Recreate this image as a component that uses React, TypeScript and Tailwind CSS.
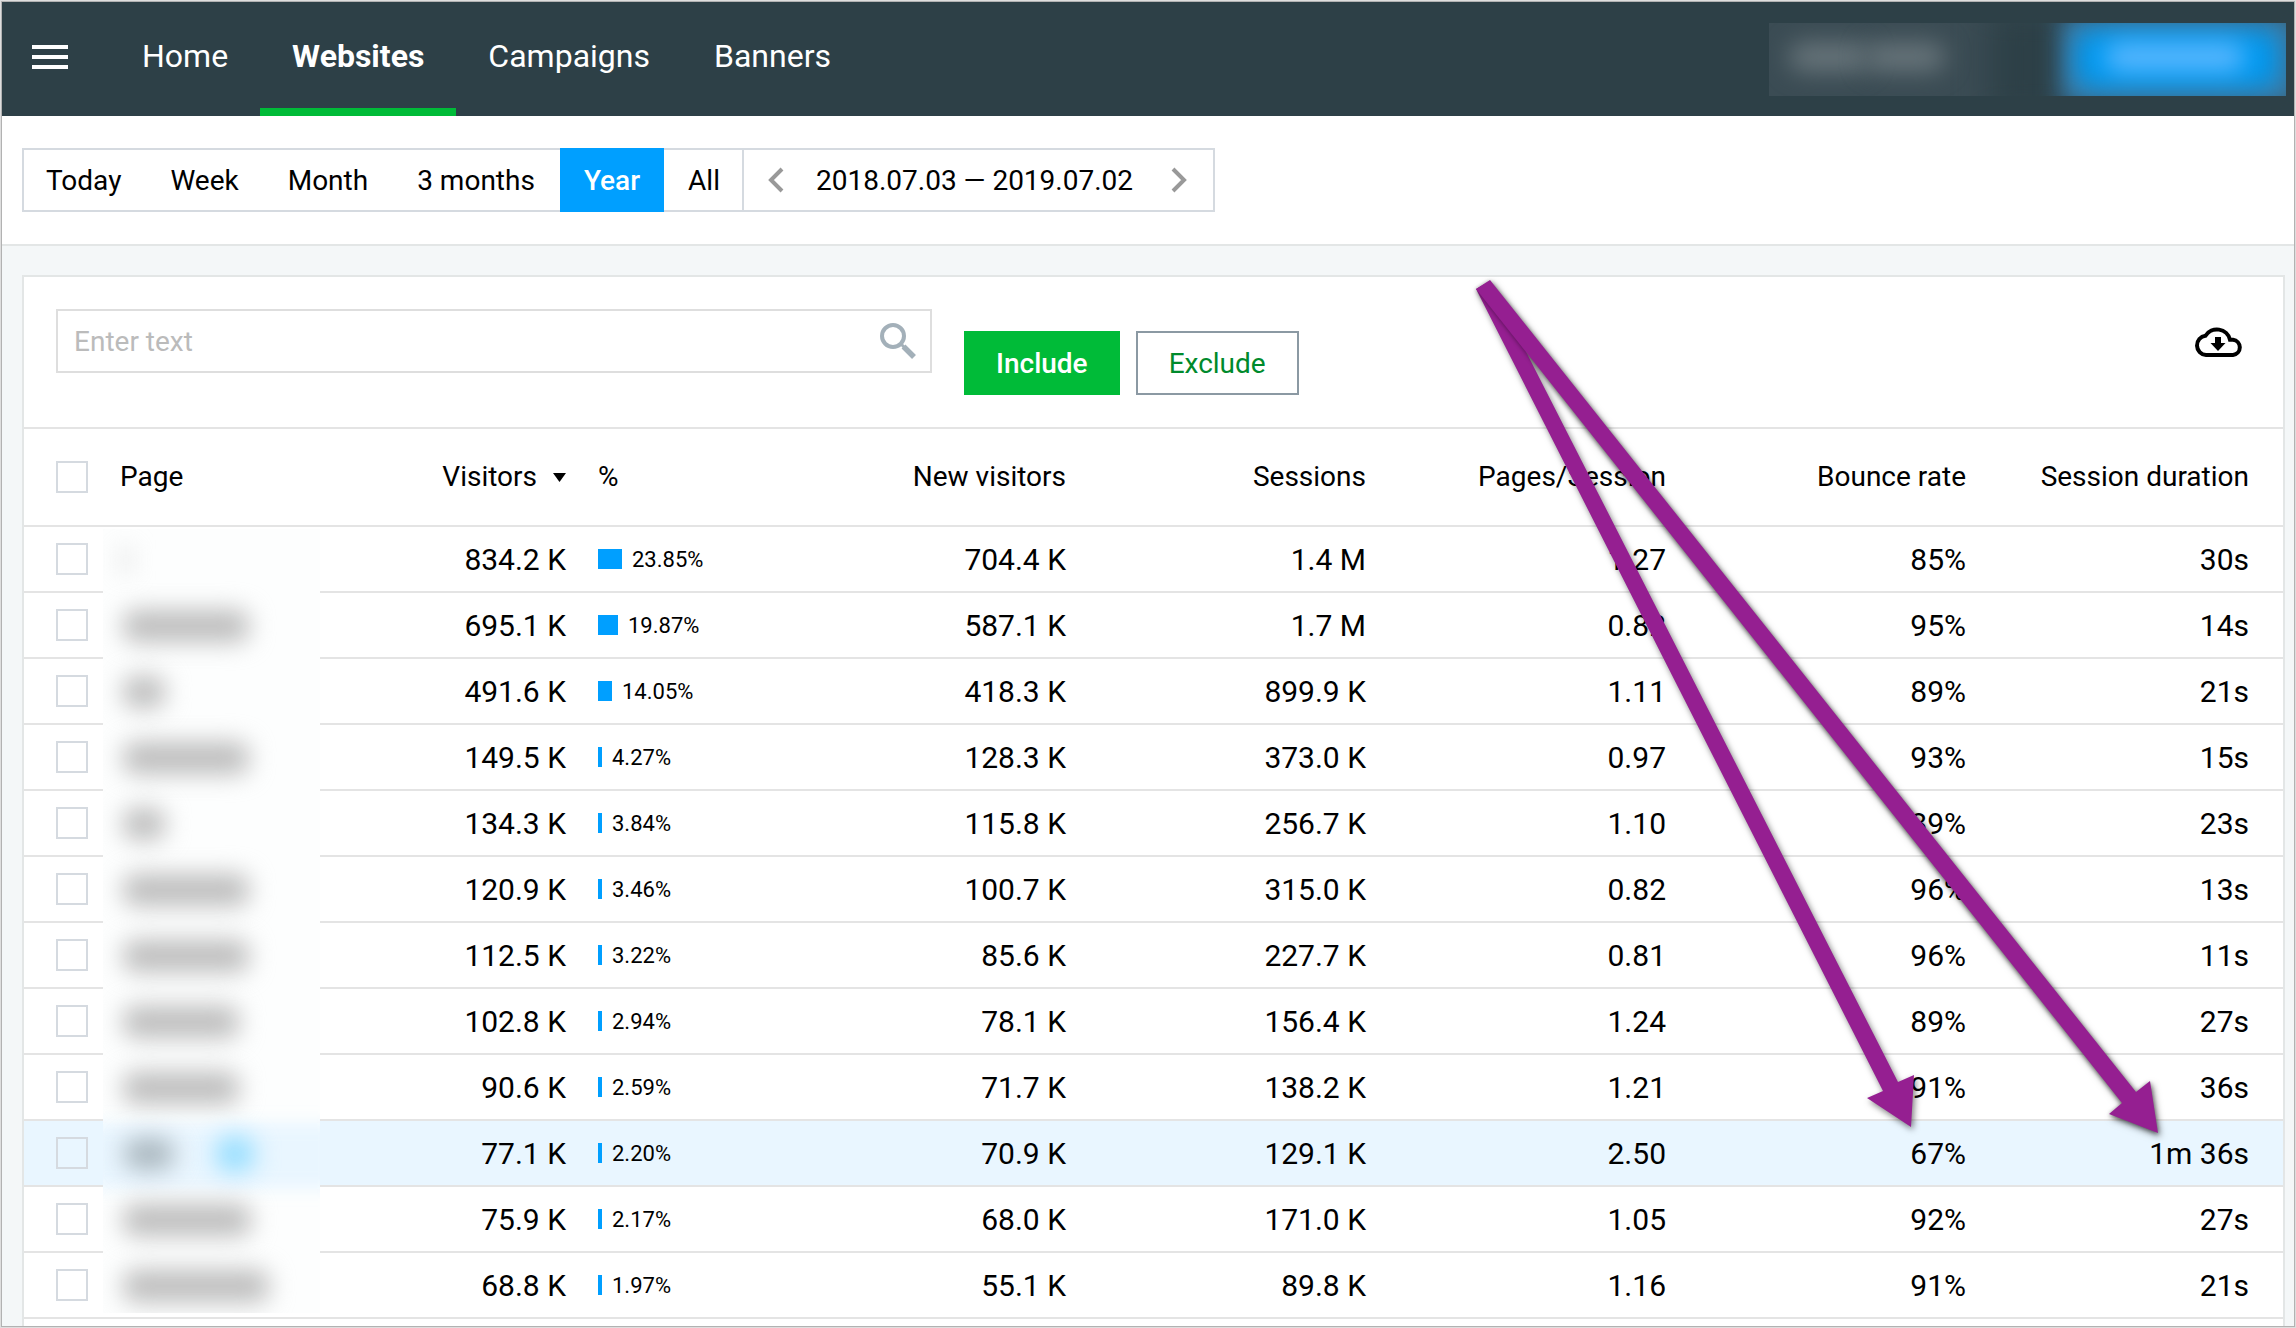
import React, { useState } from "react";

const navItems = ["Home", "Websites", "Campaigns", "Banners"];
const periods = ["Today", "Week", "Month", "3 months", "Year", "All"];

interface Row {
  visitors: string;
  percent: number;
  newVisitors: string;
  sessions: string;
  pages: string;
  bounce: string;
  duration: string;
  // width of the hidden page name
  mask: number;
}

const rows: Row[] = [
  { visitors: "834.2 K", percent: 23.85, newVisitors: "704.4 K", sessions: "1.4 M", pages: "1.27", bounce: "85%", duration: "30s", mask: 6 },
  { visitors: "695.1 K", percent: 19.87, newVisitors: "587.1 K", sessions: "1.7 M", pages: "0.82", bounce: "95%", duration: "14s", mask: 126 },
  { visitors: "491.6 K", percent: 14.05, newVisitors: "418.3 K", sessions: "899.9 K", pages: "1.11", bounce: "89%", duration: "21s", mask: 42 },
  { visitors: "149.5 K", percent: 4.27, newVisitors: "128.3 K", sessions: "373.0 K", pages: "0.97", bounce: "93%", duration: "15s", mask: 126 },
  { visitors: "134.3 K", percent: 3.84, newVisitors: "115.8 K", sessions: "256.7 K", pages: "1.10", bounce: "89%", duration: "23s", mask: 42 },
  { visitors: "120.9 K", percent: 3.46, newVisitors: "100.7 K", sessions: "315.0 K", pages: "0.82", bounce: "96%", duration: "13s", mask: 126 },
  { visitors: "112.5 K", percent: 3.22, newVisitors: "85.6 K", sessions: "227.7 K", pages: "0.81", bounce: "96%", duration: "11s", mask: 126 },
  { visitors: "102.8 K", percent: 2.94, newVisitors: "78.1 K", sessions: "156.4 K", pages: "1.24", bounce: "89%", duration: "27s", mask: 116 },
  { visitors: "90.6 K", percent: 2.59, newVisitors: "71.7 K", sessions: "138.2 K", pages: "1.21", bounce: "91%", duration: "36s", mask: 116 },
  { visitors: "77.1 K", percent: 2.2, newVisitors: "70.9 K", sessions: "129.1 K", pages: "2.50", bounce: "67%", duration: "1m 36s", mask: 52 },
  { visitors: "75.9 K", percent: 2.17, newVisitors: "68.0 K", sessions: "171.0 K", pages: "1.05", bounce: "92%", duration: "27s", mask: 128 },
  { visitors: "68.8 K", percent: 1.97, newVisitors: "55.1 K", sessions: "89.8 K", pages: "1.16", bounce: "91%", duration: "21s", mask: 146 },
];

const HIGHLIGHTED = 9;

const Checkbox = ({ label }: { label: string }) => (
  <input
    type="checkbox"
    aria-label={label}
    className="block size-8 appearance-none border-2 border-[#d5dae0] checked:bg-[#009fff]"
  />
);

const Header = () => (
  <header className="flex h-[114px] shrink-0 items-stretch bg-[#2d4047] pr-2 text-white">
    <button aria-label="Menu" className="flex w-[108px] flex-col justify-center gap-1.5 pb-1 pl-[30px]">
      <span className="h-1 w-9 bg-white" />
      <span className="h-1 w-9 bg-white" />
      <span className="h-1 w-9 bg-white" />
    </button>
    <nav className="flex text-[32px]">
      {navItems.map((item) => (
        <a
          key={item}
          href="#"
          className={
            item === "Websites"
              ? "flex items-center border-y-8 border-t-transparent border-b-[#00bb38] px-8 pb-1.5 font-bold"
              : "flex items-center px-8 pb-1.5"
          }
        >
          {item}
        </a>
      ))}
    </nav>
    {/* account area, hidden */}
    <div className="relative mt-[21px] ml-auto h-[73px] w-[517px] overflow-hidden bg-[#3b4c54]">
      <div className="absolute -top-4 left-[220px] h-28 w-24 bg-[#2d4047] blur-lg" />
      <div className="absolute top-5 left-5 h-7 w-20 rounded-full bg-[#69767c] blur-md" />
      <div className="absolute top-5 left-24 h-7 w-20 rounded-full bg-[#69767c] blur-md" />
      <div className="absolute -top-2 left-[292px] h-[90px] w-[236px] bg-[#387fae] blur-md" />
      <div className="absolute top-2 left-[308px] h-14 w-[200px] rounded-2xl bg-[#0099f0] blur-md" />
      <div className="absolute top-5 left-[336px] h-7 w-[140px] rounded-full bg-[#5cb8ff] blur-md" />
    </div>
  </header>
);

const PeriodBar = () => {
  const [period, setPeriod] = useState("Year");

  return (
    <div className="flex shrink-0 border-b-2 border-[#e3e6e6] bg-white py-8 pl-5 text-[28px]">
      <div className="flex h-16">
        <div className="flex border-y-2 border-l-2 border-[#d5dae0]">
          {periods.map((item) => (
            <button
              key={item}
              onClick={() => setPeriod(item)}
              className={
                item === period
                  ? "-my-0.5 bg-[#009fff] px-6 pt-0.5 font-medium text-white"
                  : "pt-0.5 pr-[25px] pl-6 first:pl-[22px] last:pr-[22px]"
              }
            >
              {item}
            </button>
          ))}
        </div>
        <div className="flex items-center border-2 border-[#d5dae0]">
          <button aria-label="Previous period" className="px-6">
            <svg width="16" height="26" viewBox="0 0 16 26" fill="none" stroke="#999" strokeWidth="4">
              <path d="M14 2 3 13l11 11" />
            </svg>
          </button>
          <span className="pt-0.5 pr-3.5 pl-2">2018.07.03 — 2019.07.02</span>
          <button aria-label="Next period" className="pr-[26px] pl-6">
            <svg width="16" height="26" viewBox="0 0 16 26" fill="none" stroke="#999" strokeWidth="4">
              <path d="M2 2l11 11L2 24" />
            </svg>
          </button>
        </div>
      </div>
    </div>
  );
};

const Toolbar = () => (
  <div className="flex h-[152px] items-start border-b-2 border-[#e4e4e4] pt-8 pr-10 pl-8">
    <label className="flex h-16 w-[876px] items-center border-2 border-[#dedede] pr-3.5 pl-4">
      <input
        type="text"
        aria-label="Filter pages"
        placeholder="Enter text"
        className="min-w-0 flex-1 pt-0.5 text-[28px] outline-none placeholder:text-[#bbb]"
      />
      <svg width="36" height="36" viewBox="0 0 36 36" fill="none" stroke="#a3b0b9">
        <circle cx="13" cy="13" r="11" strokeWidth="4" />
        <path d="M21 21l3 3" strokeWidth="3" />
        <path d="M23.500 23.500l10.500 10.500" strokeWidth="5.500" />
      </svg>
    </label>
    <div className="mt-[22px] ml-8 flex gap-4 text-[28px]">
      <button className="h-16 bg-[#00bb38] px-8 pt-0.5 font-medium text-white">Include</button>
      <button className="h-16 border-2 border-[#8b99a3] px-[31px] pt-0.5 text-[#008a2c]">Exclude</button>
    </div>
    <button aria-label="Download" className="mt-4 ml-auto">
      <svg width="50" height="34" viewBox="0 0 50 34">
        <path
          d="M13 30a9.700 9.700 0 0 1-.5-19.300A13.500 13.500 0 0 1 37 14.700h3a7.700 7.700 0 0 1 0 15.300z"
          fill="none"
          stroke="#000"
          strokeWidth="4"
        />
        <path d="M22 12h6v6h4.500L25 26l-7.500-8H22z" />
      </svg>
    </button>
  </div>
);

// Covers the page names of all the rows
const PageNamesMask = () => (
  <div className="absolute top-[252px] left-[79px] h-[784px] w-[217px] overflow-hidden bg-[#fdfefe]">
    {rows.map((row, i) => (
      <div key={row.visitors} className="relative flex h-[66px] items-center pb-1 pl-5">
        {i === HIGHLIGHTED && <div className="absolute -inset-x-4 inset-y-0 bg-[#e9f6ff] blur-sm" />}
        <div
          className={
            i === HIGHLIGHTED
              ? "relative h-8 rounded-full bg-[#a9b6be] blur-md"
              : i === 0
                ? "h-6 bg-[#c8c8c8] blur-md"
                : "h-8 rounded-xl bg-[#bcbcbc] blur-md"
          }
          style={{ width: row.mask }}
        />
        {i === HIGHLIGHTED && <div className="relative ml-10 h-9 w-10 rounded-full bg-[#94ddff] blur-md" />}
      </div>
    ))}
  </div>
);

const StatsTable = () => (
  <table className="w-full table-fixed border-collapse text-right text-[30px]">
    <colgroup>
      <col className="w-20" />
      <col className="w-[240px]" />
      <col className="w-[239px]" />
      <col className="w-[167px]" />
      <col className="w-[332px]" />
      <col className="w-[300px]" />
      <col className="w-[300px]" />
      <col className="w-[300px]" />
      <col className="w-[301px]" />
    </colgroup>
    <thead>
      <tr className="h-[97px] border-b-2 border-[#e4e4e4] text-[28px] *:p-0 *:font-normal">
        <th>
          <div className="pl-8">
            <Checkbox label="Select all pages" />
          </div>
        </th>
        <th className="text-left">
          <div className="pl-4">Page</div>
        </th>
        <th>
          <button className="inline-flex items-center gap-4 pr-[17px]">
            Visitors
            <svg width="13" height="9" viewBox="0 0 13 9">
              <path d="M0 0h13L6.500 9z" />
            </svg>
          </button>
        </th>
        <th className="text-left">
          <div className="pl-[15px]">%</div>
        </th>
        <th>
          <div className="pr-4">New visitors</div>
        </th>
        <th>
          <div className="pr-4">Sessions</div>
        </th>
        <th>
          <div className="pr-4">Pages/Session</div>
        </th>
        <th>
          <div className="pr-4">Bounce rate</div>
        </th>
        <th>
          <div className="pr-[34px]">Session duration</div>
        </th>
      </tr>
    </thead>
    <tbody>
      {rows.map((row, i) => (
        <tr
          key={row.visitors}
          className={
            i === HIGHLIGHTED
              ? "h-[66px] border-b-2 border-[#e4e4e4] bg-[#e9f6ff] *:p-0"
              : "h-[66px] border-b-2 border-[#e4e4e4] *:p-0"
          }
        >
          <td>
            <div className="pl-8">
              <Checkbox label={`Select row ${i + 1}`} />
            </div>
          </td>
          <td />
          <td>
            <div className="pr-[17px]">{row.visitors}</div>
          </td>
          <td>
            <div className="flex items-center gap-2.5 pl-[15px] text-[22px]">
              <span
                className="h-5 bg-[#009fff]"
                style={{ width: Math.max(4, Math.round(row.percent)) }}
              />
              {row.percent.toFixed(2)}%
            </div>
          </td>
          <td>
            <div className="pr-4">{row.newVisitors}</div>
          </td>
          <td>
            <div className="pr-4">{row.sessions}</div>
          </td>
          <td>
            <div className="pr-4">{row.pages}</div>
          </td>
          <td>
            <div className="pr-4">{row.bounce}</div>
          </td>
          <td>
            <div className="pr-[34px]">{row.duration}</div>
          </td>
        </tr>
      ))}
    </tbody>
  </table>
);

const Arrows = () => (
  <svg className="pointer-events-none absolute top-0 left-0 drop-shadow-[2px_3px_3px_rgba(0,0,0,0.5)]" width="2200" height="1200" fill="#951f91">
    <path d="M1476 289 1490 281 1898 1082 1914 1075 1911 1127 1867 1098 1883 1091z" />
    <path
      className="drop-shadow-[0_1px_2px_rgba(0,0,0,0.4)]"
      d="M1476 289 1490 280 2136 1092 2150 1081 2158 1133 2109 1114 2122 1103z"
    />
  </svg>
);

const App = () => {
  return (
    <div className="relative h-screen overflow-hidden bg-[#dedede] p-px font-[Roboto,sans-serif] text-black">
      <div className="flex h-full flex-col overflow-hidden border border-[#b2b2b2] bg-[#f4f7f8]">
        <Header />
        <PeriodBar />
        <main className="relative mt-[29px] mr-[9px] ml-5 flex-1 border-x-2 border-t-2 border-[#e3e6e6] bg-white">
          <Toolbar />
          <StatsTable />
          <PageNamesMask />
        </main>
      </div>
      <Arrows />
    </div>
  );
};

export default App;
